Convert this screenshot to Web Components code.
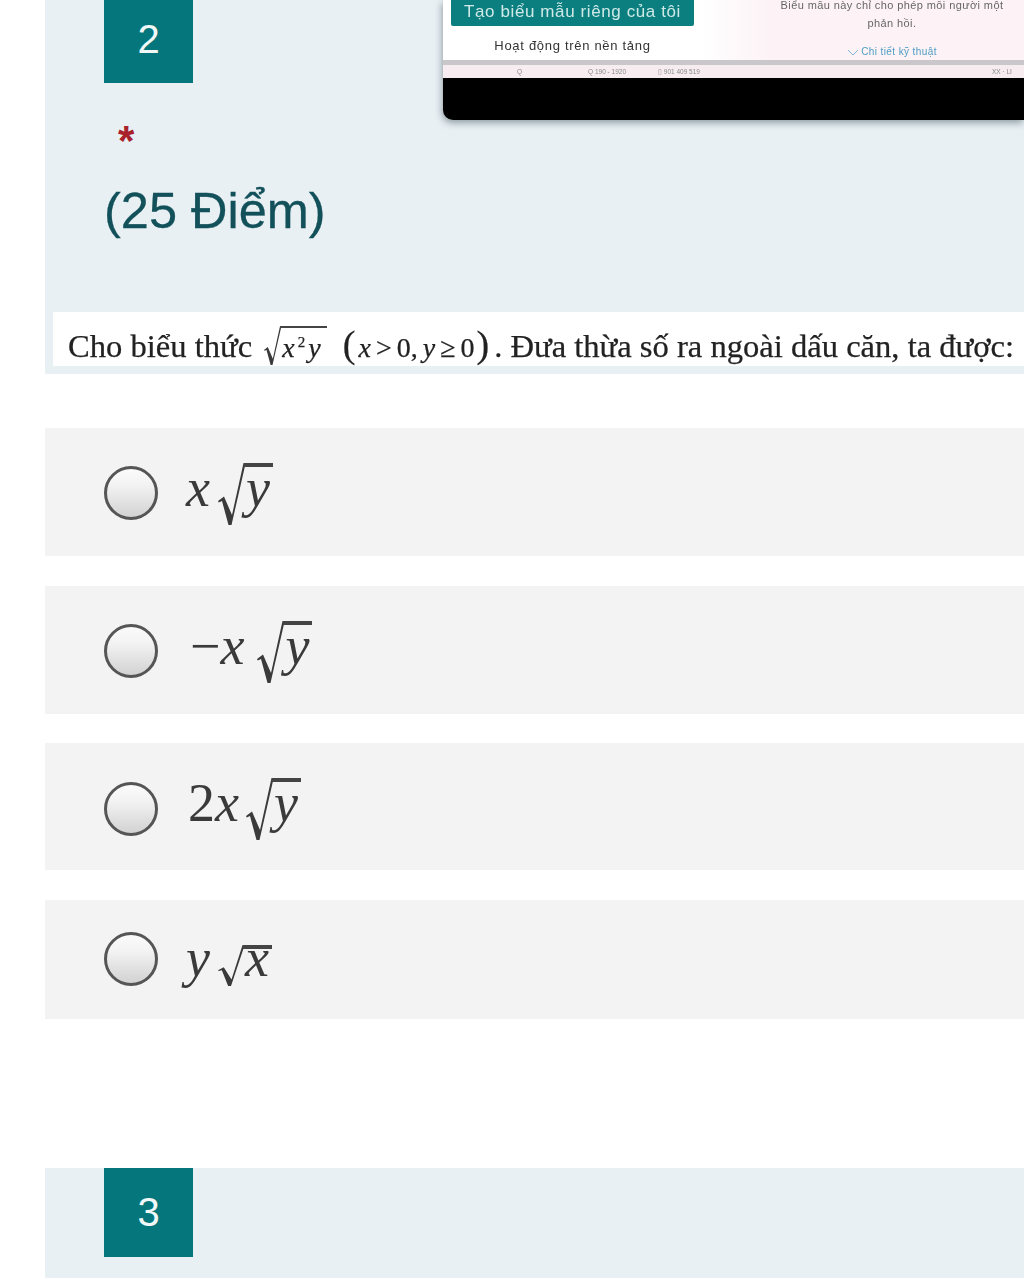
<!DOCTYPE html>
<html lang="vi">
<head>
<meta charset="utf-8">
<title>Biểu mẫu</title>
<style>
  html, body { margin: 0; padding: 0; background: #fff; }
  body { width: 1024px; height: 1278px; overflow: hidden; font-family: "Liberation Sans", Arial, sans-serif; }
  .math { font-family: "Liberation Serif", "Times New Roman", serif; font-style: italic; }
  .up { font-style: normal; }
</style>
</head>
<body>

<quiz-form>
  <quiz-question number="2" height="374" numberpad="4">
    <form-shot slot="aside"></form-shot>
    <span slot="title">(25 Điểm)</span>
    <question-text>
      Cho biểu thức
      <math-root style="--h:39px;--w:17px;--line:2px;--top:0px;--lh:36px;margin:0 8px 0 4px">
        <span class="math" style="font-size:28px;letter-spacing:3px">x<sup style="font-size:15px;line-height:0;font-style:normal">2</sup>y</span>
      </math-root>
      <span class="math" style="font-size:28px;word-spacing:-2px"><span class="up" style="font-size:38px;font-weight:200">(</span><span style="margin-left:3px">x</span> <span class="up">&gt;</span> <span class="up">0,</span> y <span class="up">≥</span> <span class="up">0</span><span class="up" style="font-size:38px;margin-left:2px">)</span></span><span style="margin-left:5px">. Đưa thừa số ra ngoài dấu căn, ta được:</span>
    </question-text>
  </quiz-question>

  <option-list>
    <quiz-option style="--row:128px;--shift:4px;--radio:2px">
      <span class="math">x</span>
      <math-root style="--lh:38px;margin-left:8px"><span class="math">y</span></math-root>
    </quiz-option>
    <quiz-option style="--row:128px;--shift:5px;--radio:3px">
      <span class="math" style="margin-left:4px"><span class="up">−</span>x</span>
      <math-root style="--lh:38px;margin-left:13px"><span class="math">y</span></math-root>
    </quiz-option>
    <quiz-option style="--row:127px;--shift:5px;--radio:4px">
      <span class="math" style="margin-left:2px"><span class="up">2</span>x</span>
      <math-root style="--lh:38px;margin-left:7px"><span class="math">y</span></math-root>
    </quiz-option>
    <quiz-option style="--row:119px;--shift:5px;--radio:0px">
      <span class="math">y</span>
      <math-root style="--h:41px;--w:26px;--top:0px;--lh:18px;margin-left:8px"><span class="math">x</span></math-root>
    </quiz-option>
  </option-list>

  <quiz-question number="3" numberheight="89" class="next"></quiz-question>
</quiz-form>

<script>
  class QuizForm extends HTMLElement {
    constructor() {
      super();
      this.attachShadow({ mode: 'open' });
      this.shadowRoot.innerHTML = `
        <style>
          :host { display: block; padding-left: 45px; }
          ::slotted(.next) { margin-top: 149px; }
        </style>
        <slot></slot>
      `;
    }
  }

  class QuizQuestion extends HTMLElement {
    constructor() {
      super();
      this.attachShadow({ mode: 'open' });
    }

    connectedCallback() {
      const num = this.getAttribute('number') || '';
      const numH = this.getAttribute('numberheight') || 83;
      const numPad = this.getAttribute('numberpad') || 0;
      const height = this.getAttribute('height') || 110;
      const full = this.hasAttribute('height');
      this.shadowRoot.innerHTML = `
        <style>
          :host {
            display: block;
            height: ${height}px;
            background: #e8f0f4;
            overflow: hidden;
          }
          .head { display: flex; justify-content: space-between; padding-left: 59px; height: 312px; }
          .left { width: 300px; }
          .num {
            width: 89px;
            height: ${numH}px;
            box-sizing: border-box;
            padding-bottom: ${numPad}px;
            background: #05777c;
            color: #f2f7f7;
            font-size: 40px;
            display: flex;
            align-items: center;
            justify-content: center;
          }
          .star { color: #a8222c; font-size: 42px; font-weight: 700; line-height: 46px; margin: 35px 0 0 14px; height: 46px; }
          .title { color: #12505a; -webkit-text-stroke: 0.3px #12505a; font-size: 50.5px; line-height: 58px; margin: 18px 0 0; font-weight: 400; }
          .body { padding-left: 8px; }
        </style>
        <div class="head">
          <div class="left">
            <div class="num">${num}</div>
            ${full ? '<div class="star">*</div><h2 class="title"><slot name="title"></slot></h2>' : ''}
          </div>
          <slot name="aside"></slot>
        </div>
        <div class="body"><slot></slot></div>
      `;
    }
  }

  class FormShot extends HTMLElement {
    constructor() {
      super();
      this.attachShadow({ mode: 'open' });
      this.shadowRoot.innerHTML = `
        <style>
          :host {
            display: block;
            width: 581px;
            height: 120px;
            font-family: "Liberation Sans", sans-serif;
            filter: blur(0.4px);
            box-shadow: -1px 3px 7px rgba(40, 60, 70, 0.45);
            border-bottom-left-radius: 10px;
            overflow: hidden;
            background: #000;
          }
          .page {
            display: flex;
            height: 60px;
            background: #fff;
            overflow: hidden;
          }
          .col-a { width: 258px; padding-left: 8px; box-sizing: border-box; flex: none; }
          .btn {
            width: 243px;
            height: 26px;
            box-sizing: border-box;
            background: #0b7f80;
            color: #cfe9e6;
            font-size: 17px;
            letter-spacing: .6px;
            line-height: 23px;
            text-align: center;
            border-radius: 0 0 2px 2px;
          }
          .platform { width: 243px; margin-top: 12px; text-align: center; font-size: 13px; line-height: 16px; color: #333; letter-spacing: .7px; }
          .col-b {
            flex: 1;
            padding-left: 44px;
            background: linear-gradient(90deg, #fff, #fdf3f6 20%);
            color: #666;
            font-size: 11px;
            letter-spacing: .4px;
          }
          .line { width: 294px; text-align: center; line-height: 10px; white-space: nowrap; }
          .line + .line { margin-top: 8px; }
          .tech { width: 294px; text-align: center; color: #4d9cc4; margin-top: 17px; font-size: 10px; line-height: 14px; }
          .tech svg { vertical-align: -1px; margin-right: 2px; }
          .bar { height: 5px; background: #c9c7c9; }
          .status {
            height: 13px;
            background: #f7edf1;
            color: #888;
            font-size: 6.5px;
            line-height: 13px;
            display: flex;
          }
          .status span { flex: none; }
        </style>
        <div class="page">
          <div class="col-a">
            <div class="btn">Tạo biểu mẫu riêng của tôi</div>
            <div class="platform">Hoạt động trên nền tảng</div>
          </div>
          <div class="col-b">
            <div class="line">Biểu mẫu này chỉ cho phép mỗi người một</div>
            <div class="line">phản hồi.</div>
            <div class="tech"><svg width="12" height="7" viewBox="0 0 12 7"><path d="M1 1l5 5 5-5" fill="none" stroke="#7fb6d6" stroke-width="1"/></svg>Chi tiết kỹ thuật</div>
          </div>
        </div>
        <div class="bar"></div>
        <div class="status">
          <span style="margin-left:74px">Q</span>
          <span style="margin-left:66px">Q 190 - 1920</span>
          <span style="margin-left:32px">▯ 901 409 519</span>
          <span style="margin-left:292px">XX · LI</span>
        </div>
      `;
    }
  }

  class QuestionText extends HTMLElement {
    constructor() {
      super();
      this.attachShadow({ mode: 'open' });
      this.shadowRoot.innerHTML = `
        <style>
          :host {
            display: block;
            height: 54px;
            box-sizing: border-box;
            padding-left: 15px;
            background: #fff;
            color: #222;
            font-family: "Liberation Serif", "Times New Roman", serif;
            font-size: 32.6px;
            line-height: 64px;
            -webkit-text-stroke: 0.25px #222;
            white-space: nowrap;
            overflow: hidden;
            filter: blur(0.4px);
          }
        </style>
        <slot></slot>
      `;
    }
  }

  class OptionList extends HTMLElement {
    constructor() {
      super();
      this.attachShadow({ mode: 'open' });
      this.shadowRoot.innerHTML = `
        <style>
          :host { display: flex; flex-direction: column; gap: 29.6px; margin-top: 54px; }
        </style>
        <slot></slot>
      `;
    }
  }

  class QuizOption extends HTMLElement {
    constructor() {
      super();
      this.attachShadow({ mode: 'open' });
      this.shadowRoot.innerHTML = `
        <style>
          :host {
            display: flex;
            align-items: center;
            gap: 28px;
            height: var(--row, 128px);
            padding-left: 59px;
            background: #f3f3f3;
            color: #3a3a3a;
          }
          .radio {
            width: 54px;
            height: 54px;
            box-sizing: border-box;
            flex: none;
            border-radius: 50%;
            border: 3px solid #555;
            margin-top: var(--radio, 0px);
            background: linear-gradient(180deg, #fbfbfb 0%, #f2f2f2 35%, #d2d2d2 100%);
            filter: blur(0.3px);
          }
          .label {
            display: inline-flex;
            align-items: baseline;
            margin-top: var(--shift, 0px);
            font-family: "Liberation Serif", "Times New Roman", serif;
            font-size: 54px;
            line-height: 40px;
            filter: blur(0.4px);
          }
        </style>
        <div class="radio"></div>
        <div class="label"><slot></slot></div>
      `;
    }
  }

  class MathRoot extends HTMLElement {
    constructor() {
      super();
      this.attachShadow({ mode: 'open' });
      this.shadowRoot.innerHTML = `
        <style>
          :host {
            display: inline-flex;
            align-items: flex-start;
            vertical-align: baseline;
            height: var(--h, 62px);
          }
          svg { display: block; width: var(--w, 27px); height: var(--h, 62px); flex: none; align-self: flex-start; }
          .body {
            align-self: baseline;
            border-top: var(--line, 4px) solid #444;
            padding: var(--top, 2px) 3px 0 2px;
            line-height: var(--lh, 26px);
            margin-left: -1px;
          }
        </style>
        <svg viewBox="0 0 27 62" preserveAspectRatio="none" aria-hidden="true">
          <path d="M0 38L6 33.5L14 52L25.5 0H27V3L13.5 62H10.5L4 38L.8 39.5Z" fill="#3a3a3a"/>
        </svg>
        <div class="body"><slot></slot></div>
      `;
    }
  }

  customElements.define('quiz-form', QuizForm);
  customElements.define('quiz-question', QuizQuestion);
  customElements.define('form-shot', FormShot);
  customElements.define('question-text', QuestionText);
  customElements.define('option-list', OptionList);
  customElements.define('quiz-option', QuizOption);
  customElements.define('math-root', MathRoot);
</script>
</body>
</html>
